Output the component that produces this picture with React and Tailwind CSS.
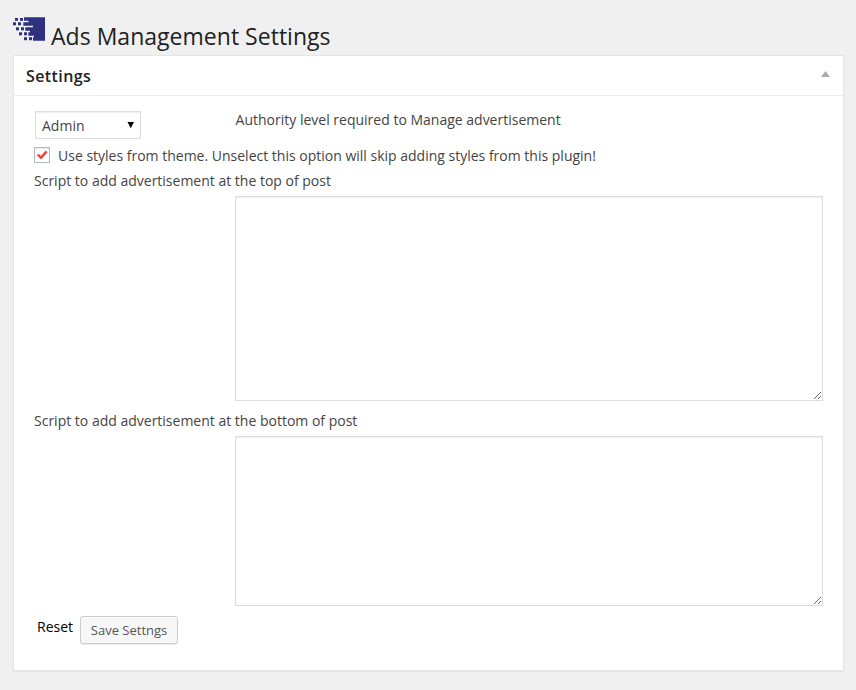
import React from "react";

function Logo() {
  return (
    <svg width="32" height="24" viewBox="0 0 32 24" className="mt-[17px] shrink-0" fill="#2e3180">
      <path d="M11 0.3H32V23.7H20V20H21V18.7H15.3V15.3H17V13.7H12.3V10.3H20V8.7H10.3V5.3H15.5V3.7H11Z" />
      <rect x="2" y="1" width="3" height="2.8" />
      <rect x="7" y="1" width="3" height="2.8" />
      <rect x="0" y="5.3" width="3" height="3" />
      <rect x="5" y="5.3" width="3" height="3" />
      <rect x="3" y="10.3" width="3" height="3" />
      <rect x="8" y="10.3" width="3" height="3" />
      <rect x="6" y="15.3" width="3" height="3" />
      <rect x="11" y="15.3" width="3" height="3" />
      <rect x="11" y="20.2" width="3" height="3" />
      <rect x="16" y="20.2" width="3" height="3" />
    </svg>
  );
}

function ScriptField({ label, height }) {
  return (
    <label className="block">
      <span className="block h-5">{label}</span>
      <textarea
        className={"mt-[5px] ml-[201px] block w-[588px] resize border border-[#ddd] bg-white shadow-[inset_0_1px_2px_rgba(0,0,0,0.07)] outline-none " + height}
      />
    </label>
  );
}

export default function App() {
  return (
    <main className="h-[690px] w-[856px] overflow-hidden bg-[#f0f0f0] pl-[13px] font-['Open_Sans',sans-serif] text-sm leading-5 text-[#444]">
      <header className="flex h-[55px] gap-[6px]">
        <Logo />
        <h1 className="pt-[21px] text-[23px] leading-[30px] font-normal tracking-[0.02px] text-[#222]">Ads Management Settings</h1>
      </header>
      <section className="h-[616px] w-[831px] border border-[#e5e5e5] bg-white shadow-[0_1px_1px_rgba(0,0,0,0.04)]">
        <div className="flex h-10 items-center justify-between border-b border-[#eee] pr-[13px] pl-3">
          <h2 className="text-base font-semibold tracking-[0.4px] text-[#222]">Settings</h2>
          <svg width="9" height="6" viewBox="0 0 9 6" className="mb-[3px]" fill="#aaa">
            <path d="M4.5 0L9 6H0Z" />
          </svg>
        </div>
        <div className="pt-[15px] pl-5">
          <div className="flex">
            <button className="ml-px flex h-7 w-[106px] items-center justify-between border border-[#ddd] pr-[6px] pl-[6px] shadow-[inset_0_1px_2px_rgba(0,0,0,0.07)]">
              <span className="pt-[2px]">Admin</span>
              <svg width="7" height="7" viewBox="0 0 7 7" fill="#000">
                <path d="M0.5 0H7L3.75 6.3Z" />
              </svg>
            </button>
            <span className="-mt-px ml-[94.6px]">Authority level required to Manage advertisement</span>
          </div>
          <div className="mt-[7px] flex h-5 items-start">
            <span className="mt-px flex size-4 items-center justify-center border border-[#b4b9be] shadow-[inset_0_1px_2px_rgba(0,0,0,0.1)]">
              <svg width="12" height="12" viewBox="0 0 12 12" fill="#e8443a">
                <path d="M0.8 6.3L2.7 4.8L4.8 7L9.5 1.7L11.6 2.9L5.2 10.5Z" />
              </svg>
            </span>
            <span className="ml-2">Use styles from theme. Unselect this option will skip adding styles from this plugin!</span>
          </div>
          <div className="mt-[5px] flex flex-col gap-[10px]">
            <ScriptField label="Script to add advertisement at the top of post" height="h-[205px]" />
            <ScriptField label="Script to add advertisement at the bottom of post" height="h-[170px]" />
          </div>
          <div className="mt-[10px] flex pl-[3px]">
            <span className="pt-px text-black">Reset</span>
            <button className="ml-[7px] h-7 w-[98px] rounded-[3px] border border-[#ccc] bg-[#f7f7f7] text-[13px] text-[#555] shadow-[inset_0_1px_0_#fff,0_1px_0_rgba(0,0,0,0.08)]">
              Save Settngs
            </button>
          </div>
        </div>
      </section>
    </main>
  );
}
